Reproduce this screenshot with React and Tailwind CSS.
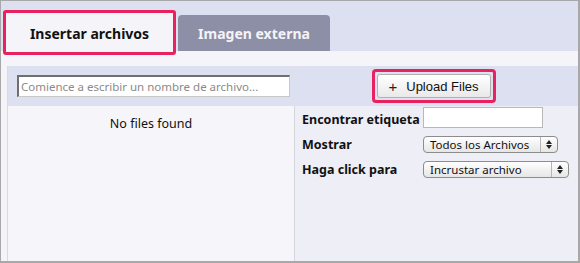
export default function App() {
  const sel = (label, w) => (
    <div className={`flex items-center h-[17px] rounded-[4px] border border-[#8c8c8c] bg-gradient-to-b from-[#ffffff] to-[#e6e6e6] ${w}`}>
      <span className="flex-1 pl-[6px] text-[11.5px] leading-[15px] text-[#111] whitespace-nowrap overflow-visible">{label}</span>
      <span className="flex h-full w-[17px] shrink-0 flex-col items-center justify-center border-l border-[#b5b5b5] gap-[1px]">
        <svg width="6" height="4" viewBox="0 0 6 4"><path d="M0 4 L3 0 L6 4 Z" fill="#222" /></svg>
        <svg width="6" height="4" viewBox="0 0 6 4"><path d="M0 0 L3 4 L6 0 Z" fill="#222" /></svg>
      </span>
    </div>
  );
  return (
    <div className="w-[580px] h-[263px] bg-white" style={{ fontFamily: '"Noto Sans", "DejaVu Sans", sans-serif' }}>
      <div className="w-[580px] h-[263px] border-t border-l border-r-2 border-b-2 border-[#a8a8a8] flex flex-col bg-[#f4f4f9]">
        <div className="h-[50px] bg-[#dde0f1] flex items-end pl-[2px] shrink-0">
          <div className="relative z-10 mb-[-4px] w-[173px] h-[45px] border-[3px] border-[#e8215f] rounded-[3px] bg-[#f4f4f9] flex items-center justify-center">
            <span className="text-[14px] font-bold text-[#111] pt-[1px]">Insertar archivos</span>
          </div>
          <div className="ml-[2px] w-[152px] h-[36px] rounded-t-[4px] bg-[#8d8fa6] flex items-center justify-center">
            <span className="text-[14px] font-bold text-[#f4f4f8]">Imagen externa</span>
          </div>
        </div>
        <div className="flex-1 pt-[15px] pl-[6px] flex">
          <div className="flex-1 flex flex-col border-l border-[#d9d9e2]">
            <div className="h-[40px] bg-[#dde0f0] flex items-center shrink-0">
              <div className="w-[287px] flex items-center pl-[9px]">
                <div className="w-[273px] h-[22px] bg-white border border-[#c8c8c8] border-t-[#6f6f6f] border-l-[#6f6f6f] border-t-2 border-l-2 flex items-center pl-[2px]">
                  <span className="text-[11.5px] text-[#8a8a8a] leading-none">Comience a escribir un nombre de archivo...</span>
                </div>
              </div>
              <div className="flex-1 flex justify-center pr-[6px]">
                <div className="w-[124px] h-[34px] border-[3px] border-[#e8215f] rounded-[4px] p-[2px] flex">
                  <div className="flex-1 rounded-[3px] border border-[#b0b0b0] bg-gradient-to-b from-[#ffffff] to-[#e9e9e9] flex items-center justify-center gap-[9px]">
                    <span className="text-[15px] leading-none text-[#222]" style={{ fontFamily: '"Liberation Sans", sans-serif' }}>+</span>
                    <span className="text-[13px] leading-none text-[#111]" style={{ fontFamily: '"Liberation Sans", sans-serif' }}>Upload Files</span>
                  </div>
                </div>
              </div>
            </div>
            <div className="flex-1 flex">
              <div className="w-[287px] bg-[#f6f6fa] border-r border-[#d6d6dd] flex justify-center pt-[9px]">
                <span className="text-[12.5px] text-[#111]">No files found</span>
              </div>
              <div className="flex-1 bg-[#eeeef6] pl-[7px] pt-[1px] grid grid-cols-[121px_auto] content-start items-center gap-y-[7px]">
                <span className="text-[12.5px] font-bold text-[#111] leading-[17px] pt-[4px]">Encontrar etiqueta</span>
                <div className="w-[120px] h-[21px] bg-white border border-[#b8b8b8]"></div>
                <span className="text-[12.5px] font-bold text-[#111] leading-[17px] pt-[1px]">Mostrar</span>
                {sel("Todos los Archivos", "w-[135px]")}
                <span className="text-[12.5px] font-bold text-[#111] leading-[17px] pt-[1px]">Haga click para</span>
                {sel("Incrustar archivo", "w-[146px]")}
              </div>
            </div>
          </div>
        </div>
      </div>
    </div>
  );
}
